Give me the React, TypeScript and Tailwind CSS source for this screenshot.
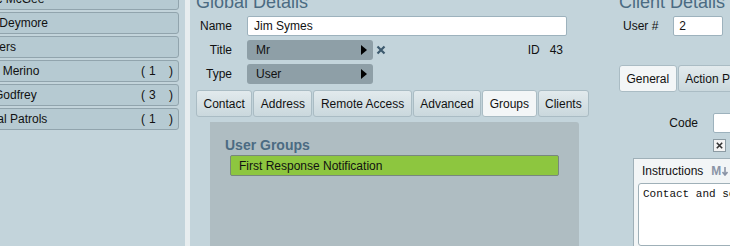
import React from "react";

const people = [
  { name: "Alec McGee", shift: "pl-[8px]" },
  { name: "Lisa Deymore", shift: "pl-[3px]" },
  { name: "Others", shift: "pl-[9px]" },
  { name: "Ana Merino", shift: "pl-[7px]", count: 1 },
  { name: "Ed Godfrey", shift: "pl-[5px]", count: 3 },
  { name: "Local Patrols", shift: "pl-[7px]", count: 1 },
];

const tabs = ["Contact", "Address", "Remote Access", "Advanced", "Groups", "Clients"];

function Tab({ label, active }: { label: string; active?: boolean }) {
  return (
    <div
      className={
        active
          ? "h-[27px] px-[6.5px] flex items-center shrink-0 whitespace-nowrap rounded-[3px] border border-[#aabcc4] bg-[#f3f6f7]"
          : "h-[27px] px-[6.5px] flex items-center shrink-0 whitespace-nowrap rounded-[3px] border border-[#aabcc4] bg-linear-to-b from-[#e2eaed] to-[#cad8dd]"
      }
    >
      {label}
    </div>
  );
}

function Arrow() {
  return (
    <svg width="6" height="10" viewBox="0 0 6 10" className="shrink-0">
      <polygon points="0,0 6,5 0,10" fill="#000" />
    </svg>
  );
}

function Field({ label, children }: { label: string; children: React.ReactNode }) {
  return (
    <div className="flex items-center h-[20px]">
      <div className="w-[36px] text-right shrink-0">{label}</div>
      <div className="ml-[15px] flex items-center flex-1">{children}</div>
    </div>
  );
}

export default function App() {
  return (
    <div className="w-[730px] h-[246px] overflow-hidden flex bg-[#c3d4db] text-[12px] text-[#111] font-['Liberation_Sans',Arial,sans-serif]">
      {/* staff list */}
      <div className="w-[185px] shrink-0 overflow-hidden">
        <div className="-mt-[12px] -ml-[30px] w-[209px] flex flex-col gap-[2px]">
          {people.map((p) => (
            <div
              key={p.name}
              className={`h-[22px] flex items-center pr-[5px] rounded-[3px] border border-[#91a4ad] bg-[#b6cad2] whitespace-nowrap ${p.shift}`}
            >
              <span>{p.name}</span>
              {p.count !== undefined && (
                <span className="ml-auto flex">
                  <span>(</span>
                  <span className="ml-[4px] w-[20px]">{p.count}</span>
                  <span>)</span>
                </span>
              )}
            </div>
          ))}
        </div>
      </div>
      <div className="w-[5px] shrink-0 bg-[#e7edef]" />

      {/* global details */}
      <div className="w-[415px] shrink-0 pl-[6px] flex flex-col">
        <div className="-mt-[9px] text-[18px] leading-[22px] text-[#4b6b82] whitespace-nowrap">Global Details</div>
        <div className="mt-[3px] w-[371px] flex flex-col gap-[4px]">
          <Field label="Name">
            <div className="w-[320px] h-[20px] flex items-center pl-[6px] bg-white border border-[#9db2bd] rounded-[2px]">
              Jim Symes
            </div>
          </Field>
          <Field label="Title">
            <div className="w-[126px] h-[20px] flex items-center justify-between pl-[9px] pr-[6px] bg-[#8e9fa7] rounded-[3px]">
              <span>Mr</span>
              <Arrow />
            </div>
            <svg width="10" height="10" viewBox="0 0 10 10" className="ml-[3px]">
              <path d="M1.5 1.5 L8.5 8.5 M8.5 1.5 L1.5 8.5" stroke="#3d5a6e" strokeWidth="2.2" />
            </svg>
            <div className="ml-auto pr-[4px] flex gap-[10px]">
              <span>ID</span>
              <span>43</span>
            </div>
          </Field>
          <Field label="Type">
            <div className="w-[126px] h-[20px] flex items-center justify-between pl-[9px] pr-[6px] bg-[#8e9fa7] rounded-[3px]">
              <span>User</span>
              <Arrow />
            </div>
          </Field>
        </div>
        <div className="mt-[6px] flex gap-px">
          {tabs.map((t) => (
            <Tab key={t} label={t} active={t === "Groups"} />
          ))}
        </div>
        <div className="mt-[5px] ml-[14px] w-[369px] flex-1 bg-[#afbdc2] rounded-tr-[3px] pt-[15px]">
          <div className="pl-[15px] text-[14px] leading-[16px] font-bold text-[#4b6b82]">User Groups</div>
          <div className="mt-[2px] ml-[20px] w-[329px] h-[21px] flex items-center pl-[8px] bg-[#8dc63f] border border-[#78877d] rounded-[2px]">
            First Response Notification
          </div>
        </div>
      </div>

      {/* client details */}
      <div className="flex-1 min-w-0 overflow-hidden pl-[14px] flex flex-col">
        <div className="-mt-[9px] text-[18px] leading-[22px] text-[#4b6b82] whitespace-nowrap">Client Details</div>
        <div className="mt-[3px] flex items-center h-[20px] pl-[4px]">
          <span className="whitespace-nowrap">User #</span>
          <div className="ml-[15px] w-[50px] h-[20px] shrink-0 flex items-center pl-[5px] bg-white border border-[#9db2bd] rounded-[2px]">
            2
          </div>
        </div>
        <div className="mt-[29px] flex gap-px">
          <Tab label="General" active />
          <Tab label="Action Plan" />
        </div>
        <div className="mt-[21px] flex items-center h-[20px]">
          <div className="w-[79px] shrink-0 text-right">Code</div>
          <div className="ml-[15px] w-[120px] h-[20px] shrink-0 bg-white border border-[#9db2bd] rounded-[2px]" />
        </div>
        <div className="mt-[6px] ml-[94px] w-[13px] h-[13px] shrink-0 flex items-center justify-center bg-[#f4f4f4] border border-[#8c9ba3]">
          <svg width="7" height="7" viewBox="0 0 7 7">
            <path d="M0.8 0.8 L6.2 6.2 M6.2 0.8 L0.8 6.2" stroke="#333" strokeWidth="1.6" />
          </svg>
        </div>
        <div className="mt-[6px] ml-[14px] w-[200px] flex-1 shrink-0 flex flex-col bg-[#f2f5f6] border-l border-t border-[#9fb0b8]">
          <div className="h-[24px] flex items-center pl-[8px] whitespace-nowrap">
            <span>Instructions</span>
            <span className="ml-[8px] flex items-center text-[#8a94a6] font-bold text-[12px]">
              M
              <svg width="6" height="9" viewBox="0 0 6 9" className="ml-[1px]">
                <path d="M3 0 V8 M0.5 5 L3 8 L5.5 5" stroke="#8a94a6" strokeWidth="1.6" fill="none" />
              </svg>
            </span>
          </div>
          <div className="ml-[4px] flex-1 bg-white border border-[#9fb0b8] rounded-[3px] pl-[4px] pt-[3px] font-['Liberation_Mono',monospace] text-[11px] leading-[14px] whitespace-nowrap">
            Contact and secure the premises.
          </div>
        </div>
      </div>
    </div>
  );
}
